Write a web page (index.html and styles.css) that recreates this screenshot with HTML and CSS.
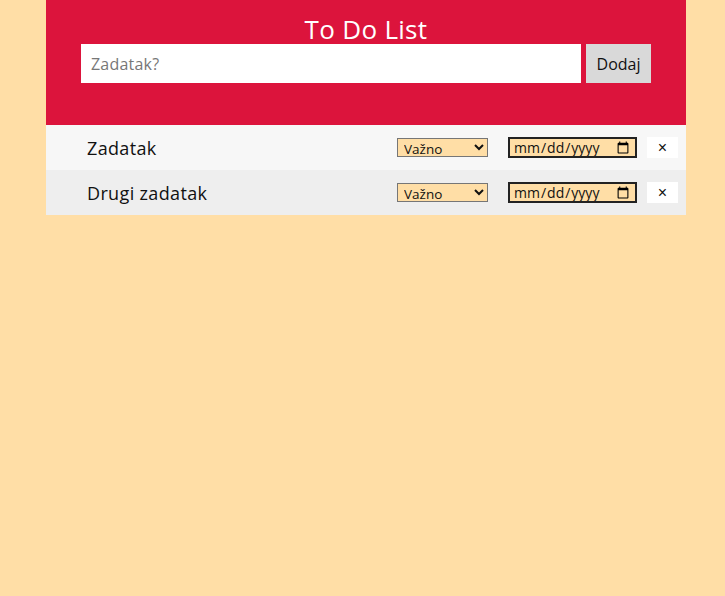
FILE: index.html
```html
<!DOCTYPE html>
<html lang="hr">
<head>
<meta charset="utf-8">
<title>To Do List</title>
<link rel="stylesheet" href="styles.css">
</head>
<body>
<div class="app">
  <header class="header">
    <h2 class="title">To Do List</h2>
    <div class="add-row">
      <input class="task-input" type="text" placeholder="Zadatak?">
      <button class="add-btn">Dodaj</button>
    </div>
  </header>
  <ul class="list">
    <li class="item">
      <span class="item-text">Zadatak</span>
      <select class="prio"><option>Važno</option><option>Nevažno</option></select>
      <input class="date" type="date">
      <button class="close">×</button>
    </li>
    <li class="item">
      <span class="item-text">Drugi zadatak</span>
      <select class="prio"><option>Važno</option><option>Nevažno</option></select>
      <input class="date" type="date">
      <button class="close">×</button>
    </li>
  </ul>
</div>
</body>
</html>
```
FILE: styles.css
```css
html, body {
  margin: 0;
  padding: 0;
}
body {
  background: #ffdea6;
  font-family: "Open Sans", "Noto Sans", sans-serif;
}
.app {
  width: 640px;
  margin-left: 46px;
}
.header {
  background: #dc143c;
  padding: 14px 35px 42px;
  text-align: center;
}
.title {
  margin: 0;
  color: #fff;
  font-weight: 400;
  font-size: 26px;
  line-height: 30px;
  letter-spacing: 0.3px;
}
.add-row {
  display: flex;
  gap: 5px;
}
.task-input {
  flex: 1;
  height: 39px;
  box-sizing: border-box;
  border: none;
  padding: 0 10px;
  font-family: inherit;
  font-size: 16px;
  letter-spacing: 0.2px;
  outline: none;
}
.task-input::placeholder {
  color: #777;
}
.add-btn {
  width: 65px;
  height: 39px;
  border: none;
  background: #d9d9d9;
  font-family: inherit;
  font-size: 16px;
  color: #111;
  padding: 0;
}
.list {
  list-style: none;
  margin: 0;
  padding: 0;
}
.item {
  display: flex;
  align-items: center;
  height: 45px;
  padding: 0 8px 0 41px;
  background: #f7f7f7;
}
.item:nth-child(2) {
  background: #eeeeee;
}
.item-text {
  flex: 1;
  font-size: 18px;
  letter-spacing: 0.35px;
  color: #111;
}
.prio {
  width: 91px;
  height: 19px;
  box-sizing: border-box;
  border: 1px solid #767676;
  border-radius: 0;
  background: #ffdea6;
  font-family: inherit;
  font-size: 13.5px;
  padding: 0 0 0 2px;
  margin-right: 20px;
  color: #111;
}
.date {
  width: 129px;
  height: 21px;
  box-sizing: border-box;
  border: 2px solid #222;
  background: #ffdea6;
  font-family: inherit;
  font-size: 14px;
  padding: 0 3px;
  margin-right: 10px;
  color: #111;
}
.close {
  width: 31px;
  height: 21px;
  border: none;
  background: #fff;
  font-size: 16px;
  padding: 0;
  color: #111;
}
```
